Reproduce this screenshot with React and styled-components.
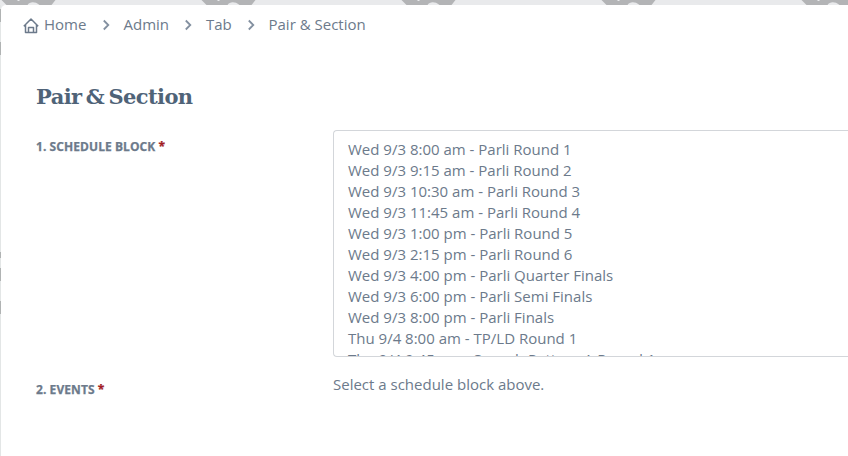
import React from 'react';
import styled, { createGlobalStyle } from 'styled-components';

const GlobalStyle = createGlobalStyle`
  * {
    box-sizing: border-box;
  }

  body {
    margin: 0;
    background: #e9eaec;
    color: #6c7a8b;
    font-family: 'Open Sans', 'Noto Sans', sans-serif;
    font-size: 15px;
    overflow: hidden;
  }
`;

const Page = styled.div`
  display: grid;
  grid-template: 5px 451px / 1px 1fr;
  height: 456px;
`;

const Pattern = styled.svg`
  grid-column: 1 / -1;
  width: 100%;
  height: 5px;
  display: block;
`;

const Edge = styled.svg`
  width: 1px;
  height: 451px;
  display: block;
`;

const Panel = styled.main`
  background: #fff;
  border-top-left-radius: 5px;
  overflow: hidden;
`;

const Breadcrumb = styled.nav`
  display: flex;
  align-items: center;
  height: 38px;
  padding-left: 22px;
`;

const Crumb = styled.span`
  width: ${(props) => props.$width}px;
  line-height: 20px;
  white-space: nowrap;
`;

const HomeIcon = styled.svg`
  width: 17px;
  height: 17px;
  margin: 3px 4px 0 0;
`;

const Chevron = styled.svg`
  width: 8px;
  height: 12px;
  margin: 1px 14px 0 15px;
`;

const Title = styled.h1`
  margin: 39px 0 0 35px;
  height: 30px;
  color: #4f6378;
  font: bold 21px/30px 'DejaVu Serif', serif;
  letter-spacing: -0.6px;
  word-spacing: -2.4px;
  white-space: nowrap;
`;

const Form = styled.form`
  display: grid;
  grid-template-columns: 297px 1fr;
  row-gap: 16px;
  margin: 18px 0 0 35px;
`;

const Label = styled.label`
  padding-top: 8px;
  font-size: 12px;
  font-weight: 700;
  line-height: 17px;
  letter-spacing: 0.07px;
  text-transform: uppercase;
  -webkit-text-stroke: 0.25px currentColor;
`;

const Required = styled.span`
  color: #a11d25;
`;

const Listbox = styled.ul`
  list-style: none;
  margin: 0;
  height: 227px;
  padding: 8px 14px 0;
  border: 1px solid #d3d6da;
  border-right: 0;
  border-radius: 4px 0 0 4px;
  overflow: hidden;
`;

const Option = styled.li`
  height: 21px;
  line-height: 21px;
  white-space: nowrap;
`;

const Hint = styled.p`
  margin: 0;
  line-height: 22px;
`;

const crumbs = [
  { name: 'Home', width: 42.5 },
  { name: 'Admin', width: 45.5 },
  { name: 'Tab', width: 25.5 },
  { name: 'Pair & Section', width: 98 },
];

const blocks = [
  'Wed 9/3 8:00 am - Parli Round 1',
  'Wed 9/3 9:15 am - Parli Round 2',
  'Wed 9/3 10:30 am - Parli Round 3',
  'Wed 9/3 11:45 am - Parli Round 4',
  'Wed 9/3 1:00 pm - Parli Round 5',
  'Wed 9/3 2:15 pm - Parli Round 6',
  'Wed 9/3 4:00 pm - Parli Quarter Finals',
  'Wed 9/3 6:00 pm - Parli Semi Finals',
  'Wed 9/3 8:00 pm - Parli Finals',
  'Thu 9/4 8:00 am - TP/LD Round 1',
  'Thu 9/4 9:45 am - Speech Pattern A Round 1',
];

const BackgroundPattern = () => (
  <Pattern viewBox="0 0 848 5">
    {[1.5, 201.5, 401.5, 601.5, 801.5].map((x) => (
      <g key={x} transform={`translate(${x} 0)`}>
        <path d="M0 0h54l-4 5H5z" fill="#b3b4b6" />
        <path d="M16 0h2v1h-2zM26 5c2-3 7-4 12 0z" fill="#e9eaec" />
      </g>
    ))}
  </Pattern>
);

const EdgePattern = () => (
  <Edge viewBox="0 0 1 451">
    <path d="M0 0h1v451H0z" fill="#e3e6e6" />
    <path d="M0 4h1v13H0zM0 37h1v13H0zM0 247h1v6H0zM0 263h1v13H0zM0 296h1v13H0z" fill="#b0b3b3" />
  </Edge>
);

const App = () => {
  return (
    <Page>
      <GlobalStyle />
      <BackgroundPattern />
      <EdgePattern />
      <Panel>
        <Breadcrumb>
          <HomeIcon viewBox="0 0 17 17" fill="none" stroke="#6c7a8b" strokeWidth="1.5" strokeLinejoin="round">
            <path d="M.8 9.2 8 2l7.2 7.2M2.5 7.5v8h11v-8M5.5 15.5v-5h5v5" />
          </HomeIcon>
          {crumbs.map((crumb, index) => (
            <React.Fragment key={crumb.name}>
              {index > 0 && (
                <Chevron viewBox="0 0 8 12" fill="none" stroke="#8390a0" strokeWidth="1.8">
                  <path d="M1.8 1.5 6.3 6 1.8 10.5" />
                </Chevron>
              )}
              <Crumb $width={crumb.width}>{crumb.name}</Crumb>
            </React.Fragment>
          ))}
        </Breadcrumb>
        <Title>Pair &amp; Section</Title>
        <Form>
          <Label>
            1. Schedule Block <Required>*</Required>
          </Label>
          <Listbox>
            {blocks.map((block) => (
              <Option key={block}>{block}</Option>
            ))}
          </Listbox>
          <Label>
            2. Events <Required>*</Required>
          </Label>
          <Hint>Select a schedule block above.</Hint>
        </Form>
      </Panel>
    </Page>
  );
};

export default App;
